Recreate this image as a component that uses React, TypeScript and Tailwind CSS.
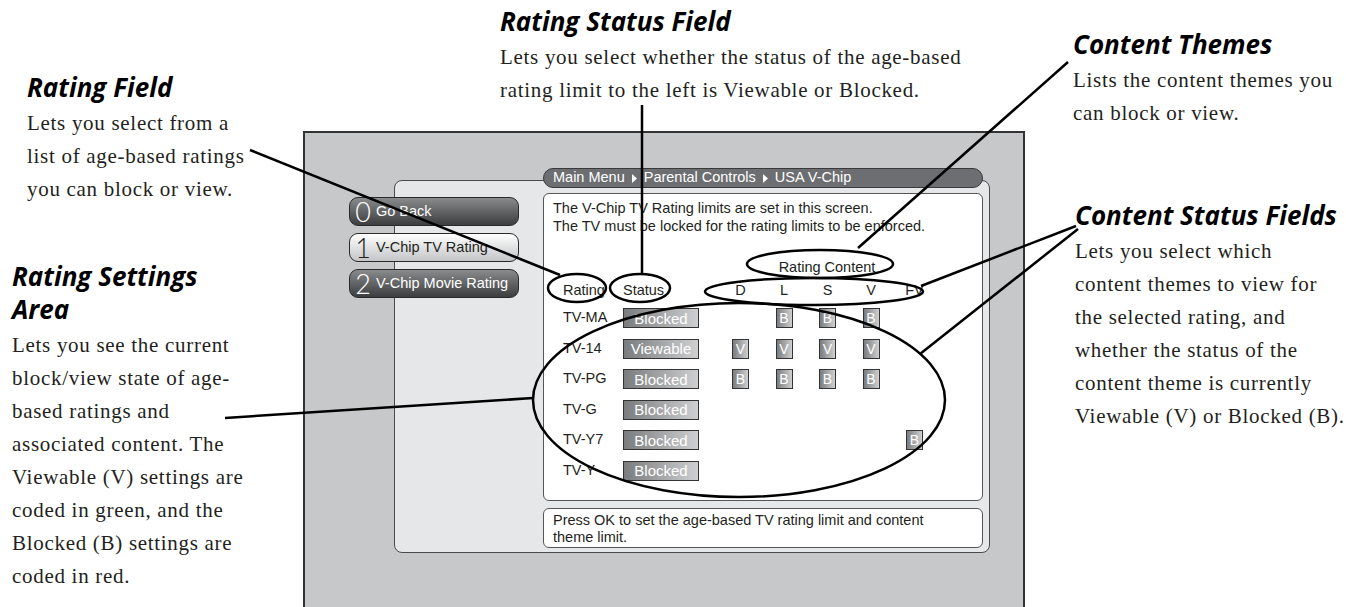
import React from "react";

const H =
  "font-['Open_Sans',sans-serif] font-bold italic text-[26px] leading-[33px] text-black whitespace-nowrap";
const B =
  "font-['Liberation_Serif',serif] text-[21px] tracking-[0.7px] leading-[33px] text-[#231f20] whitespace-nowrap";
const UI = "font-['Liberation_Sans',Arial,sans-serif]";

const rows = [
  { r: "TV-MA", s: "Blocked", c: ["", "B", "B", "B", ""] },
  { r: "TV-14", s: "Viewable", c: ["V", "V", "V", "V", ""] },
  { r: "TV-PG", s: "Blocked", c: ["B", "B", "B", "B", ""] },
  { r: "TV-G", s: "Blocked", c: ["", "", "", "", ""] },
  { r: "TV-Y7", s: "Blocked", c: ["", "", "", "", "B"] },
  { r: "TV-Y", s: "Blocked", c: ["", "", "", "", ""] },
];

function Tri() {
  return (
    <svg width="5" height="9" viewBox="0 0 5 9" className="mx-[7px] shrink-0">
      <path d="M0 0 L5 4.5 L0 9 Z" fill="#fff" />
    </svg>
  );
}

function Cell({ v }: { v: string }) {
  return (
    <div className="w-[17px] h-[20px] flex items-center justify-center">
      {v ? (
        <div className="w-[17px] h-[20px] border-[1.5px] border-[#333] bg-gradient-to-r from-[#7b7c7e] to-[#cfd0d2] text-white text-[14px] flex items-center justify-center leading-none">
          {v}
        </div>
      ) : null}
    </div>
  );
}

function MenuButton({
  n,
  label,
  light,
}: {
  n: string;
  label: string;
  light?: boolean;
}) {
  return (
    <div
      className={
        "w-[170px] h-[29px] rounded-[9px] border-[1.5px] border-[#2a2a2a] flex items-center pl-[2px] " +
        (light
          ? "bg-gradient-to-b from-[#ffffff] to-[#c4c5c7] text-[#231f20]"
          : "bg-gradient-to-b from-[#8a8b8d] to-[#3d3e40] text-white")
      }
    >
      <span className="font-['Lato',sans-serif] font-light text-[27px] leading-none w-[22px] text-center">
        {n}
      </span>
      <span className={UI + " text-[14.5px] ml-[2px] whitespace-nowrap"}>{label}</span>
    </div>
  );
}

export default function App() {
  return (
    <div className="relative w-[1346px] h-[607px] overflow-hidden bg-white">
      <div className="flex h-full">
        {/* Left column */}
        <div className="w-[303px] shrink-0 flex flex-col">
          <div className="ml-[27px] mt-[71px]">
            <div className={H}>Rating Field</div>
            <div className={B + " mt-[3px]"}>
              Lets you select from a<br />
              list of age-based ratings
              <br />
              you can block or view.
            </div>
          </div>
          <div className="ml-[12px] mt-[54px]">
            <div className={H}>
              Rating Settings
              <br />
              Area
            </div>
            <div className={B + " mt-[3px]"}>
              Lets you see the current
              <br />
              block/view state of age-
              <br />
              based ratings and
              <br />
              associated content. The
              <br />
              Viewable (V) settings are
              <br />
              coded in green, and the
              <br />
              Blocked (B) settings are
              <br />
              coded in red.
            </div>
          </div>
        </div>

        {/* Center column */}
        <div className="w-[722px] shrink-0 flex flex-col">
          <div className="h-[131px] shrink-0 pl-[197px] pt-[5px]">
            <div className={H}>Rating Status Field</div>
            <div className={B + " mt-[3px]"}>
              Lets you select whether the status of the age-based
              <br />
              rating limit to the left is Viewable or Blocked.
            </div>
          </div>
          <div className="relative h-[490px] shrink-0 border-2 border-[#333] bg-[#c7c8ca] flex flex-col">
            {/* Panel */}
            <div className="ml-[89px] mt-[47px] w-[596px] rounded-[8px] border border-[#4a4a4a] bg-[#e6e7e8] pl-[148px] pr-[6px] pb-[4px] flex flex-col">
              <div
                className={
                  UI +
                  " mt-[-13px] h-[20px] rounded-full border border-[#3a3a3a] bg-[#6d6e71] text-white text-[14.5px] flex items-center pl-[9px] whitespace-nowrap"
                }
              >
                <span>Main Menu</span>
                <Tri />
                <span>Parental Controls</span>
                <Tri />
                <span>USA V-Chip</span>
              </div>
              <div
                className={
                  UI +
                  " mt-[5px] h-[308px] rounded-[6px] border border-[#555] bg-white text-[#231f20] text-[14.5px] flex flex-col"
                }
              >
                <div className="mt-[5px] pl-[9px] leading-[18px] whitespace-nowrap">
                  The V-Chip TV Rating limits are set in this screen.
                  <br />
                  The TV must be locked for the rating limits to be enforced.
                </div>
                <div className="mt-[23px] ml-[188px] w-[190px] leading-[18px] text-center whitespace-nowrap">
                  Rating Content
                </div>
                <div className="mt-[5px] pl-[19px] flex items-center leading-[18px] whitespace-nowrap">
                  <div className="w-[60px]">Rating</div>
                  <div className="w-[76px]">Status</div>
                  <div className="ml-[33px] flex gap-[26.5px]">
                    {["D", "L", "S", "V", "FV"].map((h) => (
                      <div key={h} className="w-[17px] flex justify-center">
                        {h}
                      </div>
                    ))}
                  </div>
                </div>
                <div className="mt-[9px] pl-[19px] flex flex-col gap-[10.5px]">
                  {rows.map((row) => (
                    <div key={row.r} className="h-[20px] flex items-center">
                      <div className="w-[60px] whitespace-nowrap">{row.r}</div>
                      <div className="w-[76px] h-[20px] border-[1.5px] border-[#333] bg-gradient-to-r from-[#7b7c7e] to-[#cfd0d2] text-white text-[15px] flex items-center justify-center leading-none">
                        {row.s}
                      </div>
                      <div className="ml-[33px] flex gap-[26.5px]">
                        {row.c.map((v, i) => (
                          <Cell key={i} v={v} />
                        ))}
                      </div>
                    </div>
                  ))}
                </div>
              </div>
              <div
                className={
                  UI +
                  " mt-[7px] h-[40px] rounded-[6px] border border-[#555] bg-white text-[#231f20] text-[14.5px] leading-[16.5px] pl-[9px] pt-[3px] whitespace-nowrap"
                }
              >
                Press OK to set the age-based TV rating limit and content
                <br />
                theme limit.
              </div>
            </div>

            {/* Menu buttons lying over the panel edge */}
            <div className="absolute left-[44px] top-[64px] flex flex-col gap-[7px]">
              <MenuButton n="0" label="Go Back" />
              <MenuButton n="1" label="V-Chip TV Rating" light />
              <MenuButton n="2" label="V-Chip Movie Rating" />
            </div>
          </div>
        </div>

        {/* Right column */}
        <div className="flex-1 flex flex-col">
          <div className="ml-[48px] mt-[28px]">
            <div className={H}>Content Themes</div>
            <div className={B + " mt-[3px]"}>
              Lists the content themes you
              <br />
              can block or view.
            </div>
          </div>
          <div className="ml-[50px] mt-[69px]">
            <div className={H}>Content Status Fields</div>
            <div className={B + " mt-[3px]"}>
              Lets you select which
              <br />
              content themes to view for
              <br />
              the selected rating, and
              <br />
              whether the status of the
              <br />
              content theme is currently
              <br />
              Viewable (V) or Blocked (B).
            </div>
          </div>
        </div>
      </div>

      {/* Callout drawing */}
      <svg
        className="absolute inset-0 pointer-events-none"
        width="1346"
        height="607"
        viewBox="0 0 1346 607"
        fill="none"
        stroke="#000"
        strokeWidth="2.5"
      >
        <line x1="250" y1="150" x2="560" y2="275" />
        <line x1="642" y1="105" x2="642" y2="274" />
        <line x1="1068" y1="62" x2="858" y2="248" />
        <line x1="1076" y1="226" x2="921" y2="286" />
        <line x1="1078" y1="229" x2="920" y2="354" />
        <line x1="225" y1="418" x2="533" y2="398" />
        <ellipse cx="577" cy="288" rx="29" ry="14" />
        <ellipse cx="640" cy="288" rx="30" ry="14" />
        <ellipse cx="820" cy="264" rx="73" ry="14" />
        <ellipse cx="814" cy="291.5" rx="109" ry="13.5" />
        <ellipse cx="739" cy="400" rx="206" ry="97" />
      </svg>
    </div>
  );
}
